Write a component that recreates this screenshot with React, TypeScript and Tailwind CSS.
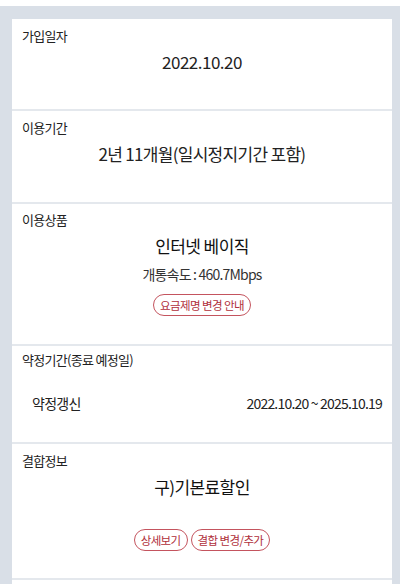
const font = { fontFamily: '"Noto Sans CJK KR", "Noto Sans", sans-serif' };

const Pill = ({ children }: { children: React.ReactNode }) => (
  <button className="h-[22px] rounded-full border border-[#c4545e] px-[6px] text-[11.5px] leading-[20px] tracking-[-0.6px] text-[#b02f3b] bg-white">
    {children}
  </button>
);

const Label = ({ children }: { children: React.ReactNode }) => (
  <div className="text-[13px] leading-[20px] text-[#222] tracking-[-0.7px]">{children}</div>
);

export default function App() {
  return (
    <div className="min-h-[584px] bg-white pt-[6px]" style={font}>
      <div className="bg-[#d9dfe7] pl-[12px] pr-[8px] pt-[13px]">
        <div className="bg-white">
          {/* 가입일자 */}
          <section className="h-[92px] border-b-2 border-[#e4e8ed] px-[10px] pt-[7px]">
            <Label>가입일자</Label>
            <div className="mt-[3px] text-center text-[17px] leading-[26px] text-[#222] tracking-[-0.5px]">2022.10.20</div>
          </section>

          {/* 이용기간 */}
          <section className="h-[93px] border-b-2 border-[#e4e8ed] px-[10px] pt-[7px]">
            <Label>이용기간</Label>
            <div className="mt-[3px] text-center text-[17px] leading-[26px] text-[#222] tracking-[-0.7px]">
              2년 11개월(일시정지기간 포함)
            </div>
          </section>

          {/* 이용상품 */}
          <section className="h-[142px] border-b-2 border-[#e4e8ed] px-[10px] pt-[6px]">
            <Label>이용상품</Label>
            <div className="mt-[3px] text-center text-[17px] leading-[26px] text-[#111] tracking-[-0.6px]">
              인터넷 베이직
            </div>
            <div className="mt-[4px] text-center text-[14px] leading-[22px] text-[#333] tracking-[-0.8px]">
              개통속도 : 460.7Mbps
            </div>
            <div className="mt-[9px] flex justify-center">
              <Pill>요금제명 변경 안내</Pill>
            </div>
          </section>

          {/* 약정기간 */}
          <section className="h-[98px] border-b-2 border-[#e4e8ed] px-[10px] pt-[4px]">
            <Label>약정기간(종료 예정일)</Label>
            <div className="mt-[22px] flex items-center justify-between pl-[10px] text-[14px] leading-[22px] text-[#222] tracking-[-0.7px]">
              <span>약정갱신</span>
              <span className="tracking-[-0.8px]">2022.10.20 ~ 2025.10.19</span>
            </div>
          </section>

          {/* 결합정보 */}
          <section className="h-[136px] border-b-2 border-[#e4e8ed] px-[10px] pt-[7px]">
            <Label>결합정보</Label>
            <div className="mt-[3px] text-center text-[17px] leading-[26px] text-[#111] tracking-[-0.6px]">
              구)기본료할인
            </div>
            <div className="mt-[29px] flex justify-center gap-[3px]">
              <Pill>상세보기</Pill>
              <Pill>결합 변경/추가</Pill>
            </div>
          </section>
          <div className="h-[20px]" />
        </div>
      </div>
    </div>
  );
}
